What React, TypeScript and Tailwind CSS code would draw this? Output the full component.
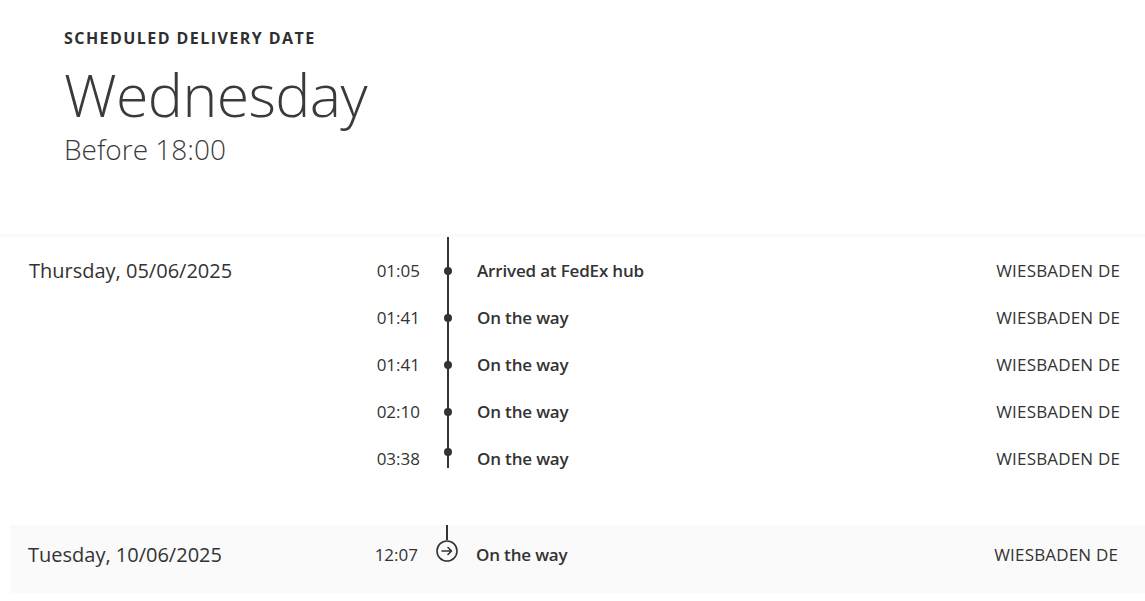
const font = { fontFamily: '"Open Sans", "Liberation Sans", sans-serif' };

type Event = { time: string; label: string; place: string };

const thursday: Event[] = [
  { time: "01:05", label: "Arrived at FedEx hub", place: "WIESBADEN DE" },
  { time: "01:41", label: "On the way", place: "WIESBADEN DE" },
  { time: "01:41", label: "On the way", place: "WIESBADEN DE" },
  { time: "02:10", label: "On the way", place: "WIESBADEN DE" },
  { time: "03:38", label: "On the way", place: "WIESBADEN DE" },
];

function ArrowCircle() {
  return (
    <svg width="22" height="22" viewBox="0 0 22 22" fill="none" stroke="#333" strokeWidth="1.6">
      <circle cx="11" cy="11" r="10" />
      <path d="M6 11h9.5M12 7.5l3.5 3.5-3.5 3.5" strokeLinecap="round" strokeLinejoin="round" />
    </svg>
  );
}

export default function App() {
  return (
    <main className="min-h-screen bg-white text-[#333]" style={font}>
      <header className="px-16 pt-[26px] h-[234px]">
        <div className="text-[16px] font-bold tracking-[0.09em] uppercase leading-6 text-[#2f2f2f]">
          Scheduled delivery date
        </div>
        <h1 className="mt-[8px] text-[59px] font-light leading-[72px] tracking-[-0.01em] text-[#3a3a3a]">
          Wednesday
        </h1>
        <p className="mt-[1px] text-[28px] font-light leading-9 text-[#3a3a3a]">Before 18:00</p>
      </header>

      <section className="border-t-[3px] border-[#fafafa] pl-[29px] pr-[25px] pb-[43px]">
        <div className="flex h-[10px]">
          <div className="w-[341px]" />
          <div className="w-[50px]" />
          <div className="ml-[18px] w-[20px] flex justify-center">
            <div className="w-[2px] h-full bg-[#333]" />
          </div>
        </div>
        {thursday.map((e, i) => (
          <div key={i} className="flex items-center h-[47px]">
            <div className="w-[341px] text-[20px] leading-7">{i === 0 ? "Thursday, 05/06/2025" : ""}</div>
            <div className="w-[50px] text-right text-[17px]">{e.time}</div>
            <div className="ml-[18px] w-[20px] h-full flex flex-col items-center">
              <div className="w-[2px] flex-1 bg-[#333]" />
              <div className="w-[8px] h-[8px] rounded-full bg-[#333] -my-[1px]" />
              <div className={`w-[2px] flex-1 ${i === thursday.length - 1 ? "max-h-[14px]" : ""} bg-[#333]`} />
              {i === thursday.length - 1 && <div className="flex-1" />}
            </div>
            <div className="ml-[19px] flex-1 text-[17px] font-semibold tracking-[-0.01em]">{e.label}</div>
            <div className="text-right text-[17px] tracking-[0.01em] text-[#333]">{e.place}</div>
          </div>
        ))}
      </section>

      <section className="ml-[10px] bg-[#fafafa] h-[68px] pl-[18px] pr-[27px] flex items-stretch">
        <div className="w-[340px] flex items-center text-[20px] pb-[9px]">Tuesday, 10/06/2025</div>
        <div className="w-[50px] flex items-center justify-end text-[17px] pb-[9px]">12:07</div>
        <div className="ml-[18px] w-[22px] flex flex-col items-center">
          <div className="w-[2px] h-[15px] bg-[#333]" />
          <ArrowCircle />
        </div>
        <div className="ml-[18px] flex-1 flex items-center text-[17px] font-semibold tracking-[-0.01em] pb-[9px]">
          On the way
        </div>
        <div className="flex items-center text-[17px] tracking-[0.01em] pb-[9px]">WIESBADEN DE</div>
      </section>
    </main>
  );
}
